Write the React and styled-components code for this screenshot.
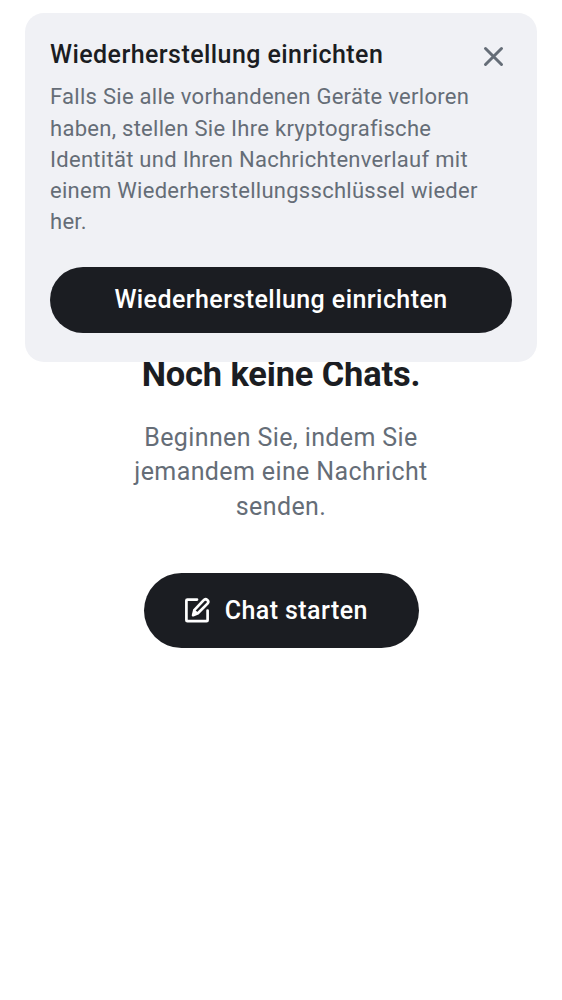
import React from 'react';
import styled, { createGlobalStyle } from 'styled-components';

const Global = createGlobalStyle`
  * { box-sizing: border-box; }
  body { margin: 0; background: #fff; font-family: Roboto, "Liberation Sans", sans-serif; }
  h2, p { margin: 0; }
  button { border: 0; font-family: inherit; cursor: pointer; }
`;

const Screen = styled.main`
  position: relative;
  height: 1000px;
  overflow: hidden;
  background: #fff;
`;

const Banner = styled.section`
  position: absolute;
  z-index: 1;
  top: 12.6px;
  left: 25px;
  right: 25px;
  height: 349.6px;
  padding: 25.4px 25px 25px;
  border-radius: 19px;
  background: #f0f1f5;
`;

const BannerHeader = styled.div`
  display: flex;
  justify-content: space-between;
  align-items: flex-start;
  height: 43.4px;
`;

const BannerTitle = styled.h2`
  font-size: 25px;
  line-height: 34px;
  font-weight: 500;
  letter-spacing: 0.43px;
  color: #1b1d22;
`;

const CloseButton = styled.button`
  display: flex;
  margin: 6px 6px 0 0;
  padding: 0;
  background: none;
  color: #656d77;
`;

const BannerText = styled.p`
  font-size: 22px;
  line-height: 31.2px;
  letter-spacing: 0.28px;
  color: #656d77;
  white-space: nowrap;
`;

const PillButton = styled.button`
  display: flex;
  align-items: center;
  justify-content: center;
  gap: 12px;
  width: ${(p) => p.$width};
  height: ${(p) => p.$height};
  margin-top: ${(p) => p.$gap};
  padding: ${(p) => p.$padding || '0'};
  border-radius: 40px;
  background: #1b1d22;
  color: #fff;
  font-size: 25px;
  line-height: 34px;
  font-weight: 500;
  letter-spacing: 0.43px;
`;

const EmptyState = styled.section`
  display: flex;
  flex-direction: column;
  align-items: center;
  padding-top: 352px;
  text-align: center;
`;

const EmptyTitle = styled.h2`
  font-size: 34.4px;
  line-height: 44px;
  font-weight: 700;
  letter-spacing: -0.13px;
  color: #1b1d22;
`;

const EmptyText = styled.p`
  margin-top: 24.8px;
  font-size: 25px;
  line-height: 34.4px;
  letter-spacing: 0.38px;
  color: #656d77;
`;

export default function App() {
  return (
    <>
      <Global />
      <Screen>
        <Banner>
          <BannerHeader>
            <BannerTitle>Wiederherstellung einrichten</BannerTitle>
            <CloseButton aria-label="Schließen">
              <svg width="25" height="25" viewBox="0 0 25 25" fill="none" stroke="currentColor" strokeWidth="3" strokeLinecap="round">
                <path d="M4.5 4.5 20.5 20.5M20.5 4.5 4.5 20.5" />
              </svg>
            </CloseButton>
          </BannerHeader>
          <BannerText>
            Falls Sie alle vorhandenen Geräte verloren<br />
            haben, stellen Sie Ihre kryptografische<br />
            Identität und Ihren Nachrichtenverlauf mit<br />
            einem Wiederherstellungsschlüssel wieder<br />
            her.
          </BannerText>
          <PillButton $width="100%" $height="66px" $gap="29.6px">Wiederherstellung einrichten</PillButton>
        </Banner>
        <EmptyState>
          <EmptyTitle>Noch keine Chats.</EmptyTitle>
          <EmptyText>
            Beginnen Sie, indem Sie<br />
            jemandem eine Nachricht<br />
            senden.
          </EmptyText>
          <PillButton $width="275px" $height="75px" $gap="49px" $padding="0 12.5px 0 0">
            <svg width="31" height="31" viewBox="0 0 31 31" fill="none" stroke="currentColor" strokeWidth="2.7" strokeLinecap="round" strokeLinejoin="round">
              <path d="M15 4.6H5.4a1 1 0 0 0-1 1v19.6a1 1 0 0 0 1 1h19.2a1 1 0 0 0 1-1V15.5" />
              <path d="M11.1 20.2 12.3 15.2 21.7 5.2a2.5 2.5 0 0 1 3.8 3.4L15.9 18.2Z" />
              <path d="m11.1 20.2 1.2-5 3.6 3Z" fill="currentColor" strokeWidth="1.4" />
            </svg>
            Chat starten
          </PillButton>
        </EmptyState>
      </Screen>
    </>
  );
}
